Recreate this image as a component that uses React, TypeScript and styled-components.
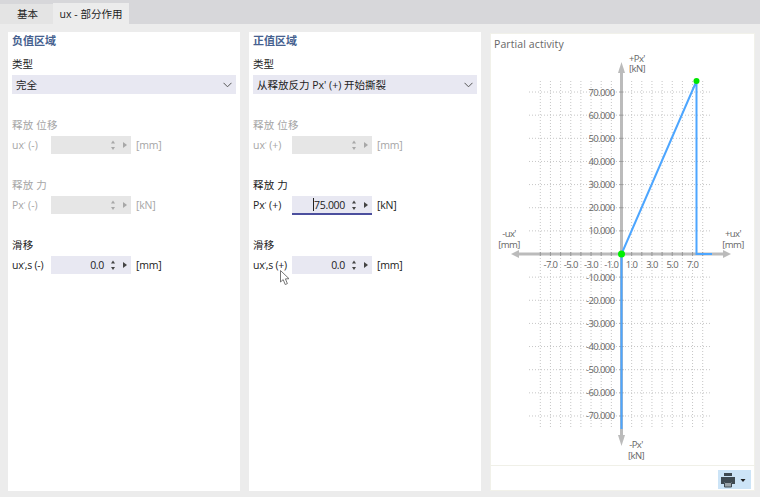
import React from 'react';
import styled, { createGlobalStyle } from 'styled-components';

const GlobalStyle = createGlobalStyle`
  html, body {
    margin: 0;
    padding: 0;
    background: #ececec;
  }
  body {
    font-family: "Open Sans", "Noto Sans CJK SC", sans-serif;
    font-size: 10.5px;
    color: #222;
  }
`;

const Page = styled.div`
  width: 760px;
  height: 497px;
  overflow: hidden;
  display: flex;
  flex-direction: column;
  background: #ececec;
`;

const TabBar = styled.div`
  height: 24px;
  flex: none;
  display: flex;
  align-items: flex-end;
  background: #d7d7da;
`;

const Tab = styled.div<{ $active?: boolean }>`
  height: ${p => (p.$active ? 21 : 20)}px;
  width: ${p => (p.$active ? 76 : 53)}px;
  display: flex;
  align-items: center;
  justify-content: center;
  font-size: 10.5px;
  padding: ${p => (p.$active ? '0 0 1px' : '0 0 1px 2px')};
  box-sizing: border-box;
  color: #222;
  background: ${p => (p.$active ? '#ececec' : '#e4e4e4')};
`;

const Main = styled.div`
  flex: 1;
  display: flex;
  gap: 9px;
  padding: 8px 5px 6px 8px;
  min-height: 0;
`;

const Panel = styled.section`
  position: relative;
  width: 232px;
  flex: none;
  background: #fff;
  padding: 0 4px;
  box-sizing: border-box;
`;

const Heading = styled.h3`
  margin: 0;
  height: 16px;
  line-height: 17px;
  font-size: 11px;
  font-weight: 700;
  color: #46618f;
`;

const TypeLabel = styled.div`
  margin-top: 8px;
  height: 16px;
  line-height: 16px;
`;

const Select = styled.div`
  margin-top: 3px;
  height: 19px;
  display: flex;
  align-items: center;
  justify-content: space-between;
  padding: 0 4px;
  background: #e8e8f2;
`;

const Chevron = styled.svg`
  width: 9px;
  height: 6px;
  fill: none;
  stroke: #555;
  stroke-width: 1;
`;

const Group = styled.div<{ $disabled?: boolean }>`
  margin-top: 22px;
  color: ${p => (p.$disabled ? '#a6a6a6' : '#222')};
`;

const GroupTitle = styled.div`
  height: 18px;
  line-height: 18px;
  margin-bottom: 2px;
  letter-spacing: 0.2px;
`;

const Row = styled.div`
  display: flex;
  align-items: center;
  height: 18px;
`;

const Symbol = styled.span<{ $wide?: boolean }>`
  width: 39px;
  flex: none;
  font-size: 10.5px;
  white-space: nowrap;
  letter-spacing: ${p => (p.$wide ? -0.25 : 0)}px;
`;

const Tick = styled.span`
  font-size: 7px;
  vertical-align: 2px;
`;

const Field = styled.div<{ $disabled?: boolean; $focused?: boolean }>`
  width: 80px;
  height: ${p => (p.$focused ? 19 : 18)}px;
  flex: none;
  display: flex;
  align-items: center;
  justify-content: flex-end;
  box-sizing: border-box;
  background: ${p => (p.$disabled ? '#e6e6e6' : '#e8e8f2')};
  border-bottom: ${p => (p.$focused ? '2px solid #4c4f9e' : 'none')};
  color: #222;
  font-size: 10.5px;
  letter-spacing: -0.3px;
  align-self: flex-start;
`;

const Caret = styled.span`
  display: inline-block;
  width: 1px;
  height: 13px;
  background: #222;
`;

const Spinner = styled.svg<{ $disabled?: boolean }>`
  width: 22px;
  height: 14px;
  margin-left: 5px;
  flex: none;
  fill: ${p => (p.$disabled ? '#a8a8a8' : '#444')};
`;

const Unit = styled.span`
  margin-left: 5px;
  font-size: 10.5px;
  letter-spacing: -0.2px;
`;

const Cursor = styled.svg`
  position: absolute;
  left: 31px;
  top: 238px;
  width: 11px;
  height: 16px;
`;

const ChartPanel = styled.section`
  width: 265px;
  flex: none;
  margin-top: 1px;
  display: flex;
  flex-direction: column;
  background: #fff;
  box-shadow: inset 0 0 0 1px #f1f1ea;
`;

const ChartTitle = styled.div`
  height: 19px;
  flex: none;
  padding: 3px 0 0 4px;
  box-sizing: border-box;
  font-size: 10.5px;
  line-height: 16px;
  letter-spacing: 0.1px;
  color: #666;
`;

const Chart = styled.svg`
  display: block;
  width: 265px;
  height: 413px;
  flex: none;
  font-family: "Open Sans", sans-serif;
  font-size: 9.5px;
  letter-spacing: -0.6px;
`;

const ChartFooter = styled.div`
  flex: 1;
  display: flex;
  align-items: flex-start;
  justify-content: flex-end;
  border-top: 1px solid #f0f0e8;
  padding: 4px 4px 0 0;
`;

const PrintButton = styled.button`
  width: 33px;
  height: 19px;
  border: 0;
  padding: 0;
  display: flex;
  align-items: center;
  justify-content: center;
  background: #cce4f7;
`;

const AxisText = styled.text`
  fill: #666;
`;

const X0 = 621.5;
const Y0 = 254;
const SX = 10.15;
const SY = 23.14;

const range = (from: number, to: number) => {
  const out: number[] = [];
  for (let i = from; i <= to; i++) if (i !== 0) out.push(i);
  return out;
};

function SpinButtons({ disabled }: { disabled?: boolean }) {
  return (
    <Spinner $disabled={disabled} viewBox="0 0 22 14">
      <path d="M2 5.5 L4 2.5 L6 5.5 Z" />
      <path d="M2 9 L4 12 L6 9 Z" />
      <path d="M14 4 L14 10 L18 7 Z" />
    </Spinner>
  );
}

function SymbolText({ base, sub, sign }: { base: string; sub?: string; sign: string }) {
  return (
    <Symbol $wide={!!sub}>
      {base}
      <Tick>'</Tick>
      {sub}
      {' '}
      {sign}
    </Symbol>
  );
}

function ValueRow(props: {
  base: string;
  sub?: string;
  sign: string;
  unit: string;
  value?: React.ReactNode;
  disabled?: boolean;
  focused?: boolean;
}) {
  return (
    <Row>
      <SymbolText base={props.base} sub={props.sub} sign={props.sign} />
      <Field $disabled={props.disabled} $focused={props.focused}>
        {props.value}
        <SpinButtons disabled={props.disabled} />
      </Field>
      <Unit>{props.unit}</Unit>
    </Row>
  );
}

function TypeSelect({ children }: { children: React.ReactNode }) {
  return (
    <Select>
      <span>{children}</span>
      <Chevron viewBox="0 0 9 6">
        <path d="M0.5 0.8 L4.5 4.8 L8.5 0.8" />
      </Chevron>
    </Select>
  );
}

function ActivityChart() {
  return (
    <Chart viewBox="490 52 265 413">
      <g stroke="#c6c6c6" strokeWidth="1" strokeDasharray="1 2">
        {range(-8, 8).map(k => (
          <line key={k} x1={X0 + k * SX} x2={X0 + k * SX} y1="81" y2="427" />
        ))}
        {range(-7, 7).map(k => (
          <line key={k} x1="529" x2="712" y1={Y0 + k * SY} y2={Y0 + k * SY} />
        ))}
      </g>

      <g stroke="#bbb" strokeWidth="3">
        <line x1="516" x2="726" y1={Y0} y2={Y0} />
        <line x1={X0} x2={X0} y1="70" y2="438" />
      </g>
      <g fill="#bbb">
        <path d="M511 254 L519 250 L519 258 Z" />
        <path d="M731 254 L723 250 L723 258 Z" />
        <path d="M621.5 62 L618 73 L625 73 Z" />
        <path d="M621.5 446 L618 435 L625 435 Z" />
      </g>
      <g stroke="#999" strokeWidth="1">
        {range(-8, 8).map(k => (
          <line key={k} x1={X0 + k * SX} x2={X0 + k * SX} y1={Y0 - 2} y2={Y0 + 2} />
        ))}
        {range(-7, 7).map(k => (
          <line key={k} x1={X0 - 2} x2={X0 + 2} y1={Y0 + k * SY} y2={Y0 + k * SY} />
        ))}
      </g>

      {[-7, -5, -3, -1, 1, 3, 5, 7].map(v => (
        <AxisText key={v} x={X0 + v * SX} y="268" textAnchor="middle">
          {v.toFixed(1)}
        </AxisText>
      ))}
      {range(-7, 7).map(k => (
        <AxisText key={k} x="614.5" y={Y0 + k * SY + 3.5} textAnchor="end">
          {(-k * 10).toFixed(3)}
        </AxisText>
      ))}

      <AxisText x="629" y="61.5">+Px'</AxisText>
      <AxisText x="629" y="72">[kN]</AxisText>
      <AxisText x="636" y="448" textAnchor="middle">-Px'</AxisText>
      <AxisText x="636" y="459" textAnchor="middle">[kN]</AxisText>
      <AxisText x="509" y="236.5" textAnchor="middle">-ux'</AxisText>
      <AxisText x="509" y="248" textAnchor="middle">[mm]</AxisText>
      <AxisText x="733" y="236.5" textAnchor="middle">+ux'</AxisText>
      <AxisText x="733" y="248" textAnchor="middle">[mm]</AxisText>

      <polyline
        points="621.5,429 621.5,254 696.5,81 696.5,254 712,254"
        fill="none"
        stroke="#4da6ff"
        strokeWidth="2"
      />
      <circle cx="621.5" cy="254" r="3.5" fill="#00f000" />
      <circle cx="696.5" cy="81" r="3" fill="#00e600" />
    </Chart>
  );
}

export default function App() {
  return (
    <Page>
      <GlobalStyle />
      <TabBar>
        <Tab>基本</Tab>
        <Tab $active>ux - 部分作用</Tab>
      </TabBar>
      <Main>
        <Panel>
          <Heading>负值区域</Heading>
          <TypeLabel>类型</TypeLabel>
          <TypeSelect>完全</TypeSelect>
          <Group $disabled>
            <GroupTitle>释放 位移</GroupTitle>
            <ValueRow base="ux" sign="(-)" unit="[mm]" disabled />
          </Group>
          <Group $disabled>
            <GroupTitle>释放 力</GroupTitle>
            <ValueRow base="Px" sign="(-)" unit="[kN]" disabled />
          </Group>
          <Group>
            <GroupTitle>滑移</GroupTitle>
            <ValueRow base="ux" sub=",s" sign="(-)" unit="[mm]" value="0.0" />
          </Group>
        </Panel>

        <Panel>
          <Heading>正值区域</Heading>
          <TypeLabel>类型</TypeLabel>
          <TypeSelect>从释放反力 Px' (+) 开始撕裂</TypeSelect>
          <Group $disabled>
            <GroupTitle>释放 位移</GroupTitle>
            <ValueRow base="ux" sign="(+)" unit="[mm]" disabled />
          </Group>
          <Group>
            <GroupTitle>释放 力</GroupTitle>
            <ValueRow
              base="Px"
              sign="(+)"
              unit="[kN]"
              focused
              value={
                <>
                  <Caret />
                  75.000
                </>
              }
            />
          </Group>
          <Group>
            <GroupTitle>滑移</GroupTitle>
            <ValueRow base="ux" sub=",s" sign="(+)" unit="[mm]" value="0.0" />
          </Group>
          <Cursor viewBox="0 0 11 16">
            <path d="M0.5 0.5 L0.5 12 L3.2 9.6 L5.2 14.5 L7.4 13.6 L5.4 8.9 L9 8.7 Z" fill="#fff" stroke="#666" strokeWidth="0.9" />
          </Cursor>
        </Panel>

        <ChartPanel>
          <ChartTitle>Partial activity</ChartTitle>
          <ActivityChart />
          <ChartFooter>
            <PrintButton aria-label="print">
              <svg width="29" height="16" viewBox="0 0 29 16">
                <path d="M4 1 H12 V4 H4 Z" fill="#3f4a52" />
                <path d="M1 5 H15 V12 H12 V10 H4 V12 H1 Z" fill="#3f4a52" />
                <path d="M4.5 10.5 H11.5 V15 H4.5 Z" fill="#9aa3a8" stroke="#3f4a52" strokeWidth="1" />
                <path d="M20.5 7 H25.5 L23 10 Z" fill="#1d1d1d" />
              </svg>
            </PrintButton>
          </ChartFooter>
        </ChartPanel>
      </Main>
    </Page>
  );
}
